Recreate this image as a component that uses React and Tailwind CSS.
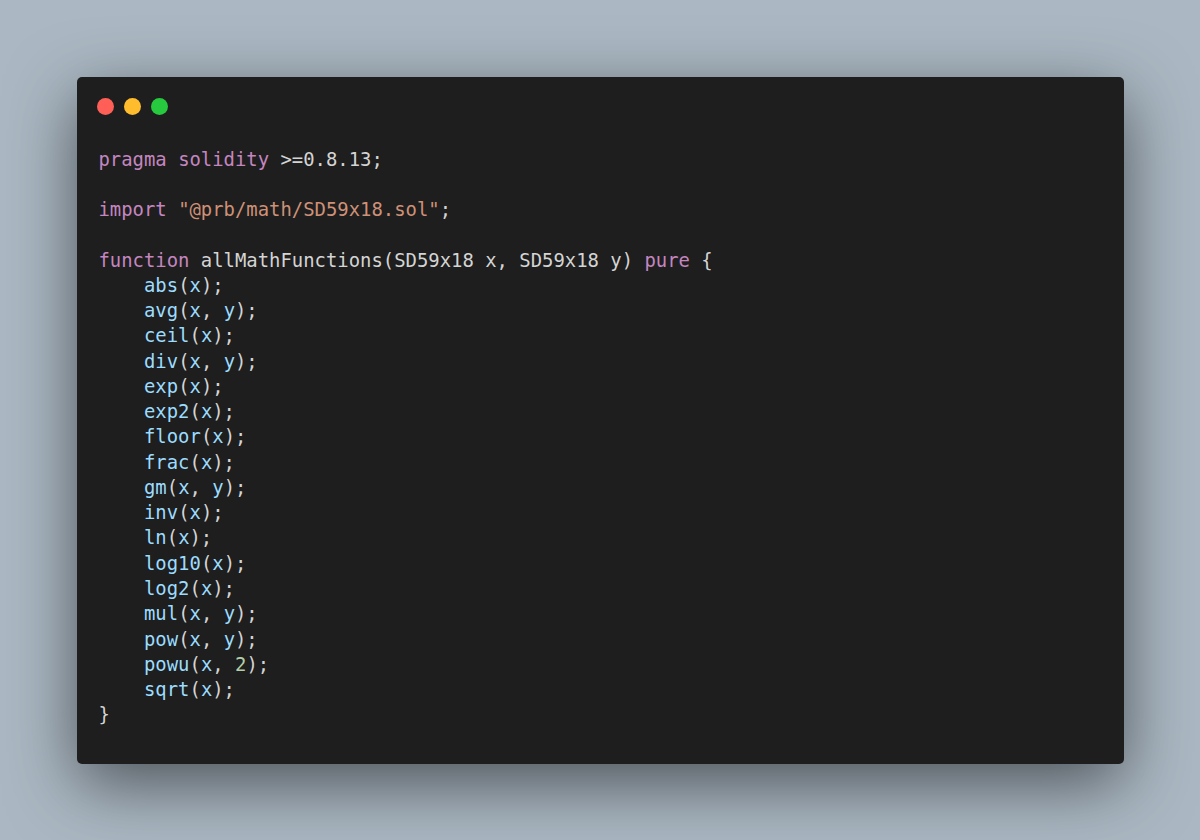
const K = ({ children }) => <span className="text-[#c586c0]">{children}</span>;
const F = ({ children }) => <span className="text-[#9cdcfe]">{children}</span>;
const S = ({ children }) => <span className="text-[#ce9178]">{children}</span>;
const N = ({ children }) => <span className="text-[#b5cea8]">{children}</span>;

const calls = [
  ["abs", ["x"]],
  ["avg", ["x", "y"]],
  ["ceil", ["x"]],
  ["div", ["x", "y"]],
  ["exp", ["x"]],
  ["exp2", ["x"]],
  ["floor", ["x"]],
  ["frac", ["x"]],
  ["gm", ["x", "y"]],
  ["inv", ["x"]],
  ["ln", ["x"]],
  ["log10", ["x"]],
  ["log2", ["x"]],
  ["mul", ["x", "y"]],
  ["pow", ["x", "y"]],
  ["powu", ["x", "2"]],
  ["sqrt", ["x"]],
];

const Call = ({ name, args }) => (
  <div>
    {"    "}
    <F>{name}</F>(
    {args.map((a, i) => (
      <span key={i}>
        {i > 0 && ", "}
        {a === "2" ? <N>{a}</N> : <F>{a}</F>}
      </span>
    ))}
    );
  </div>
);

export default function App() {
  return (
    <div className="flex h-[840px] w-full items-center justify-center bg-[#abb8c3]">
      <div className="flex h-[687px] w-[1047px] flex-col rounded-[5px] bg-[#1e1e1e] shadow-[0_20px_68px_rgba(0,0,0,0.55)]">
        <div className="flex gap-[10px] pl-[20px] pt-[21px]">
          <span className="h-[17px] w-[17px] rounded-full bg-[#ff5f56]" />
          <span className="h-[17px] w-[17px] rounded-full bg-[#ffbd2e]" />
          <span className="h-[17px] w-[17px] rounded-full bg-[#27c93f]" />
        </div>
        <pre className="mt-[32px] pl-[22px] font-['DejaVu_Sans_Mono',monospace] text-[18.9px] leading-[25.27px] text-[#d4d4d4]">
          <div>
            <K>pragma</K> <K>solidity</K> {">=0.8.13;"}
          </div>
          <div>&nbsp;</div>
          <div>
            <K>import</K> <S>"@prb/math/SD59x18.sol"</S>;
          </div>
          <div>&nbsp;</div>
          <div>
            <K>function</K> allMathFunctions(SD59x18 x, SD59x18 y) <K>pure</K> {"{"}
          </div>
          {calls.map(([name, args]) => (
            <Call key={name} name={name} args={args} />
          ))}
          <div>{"}"}</div>
        </pre>
      </div>
    </div>
  );
}
